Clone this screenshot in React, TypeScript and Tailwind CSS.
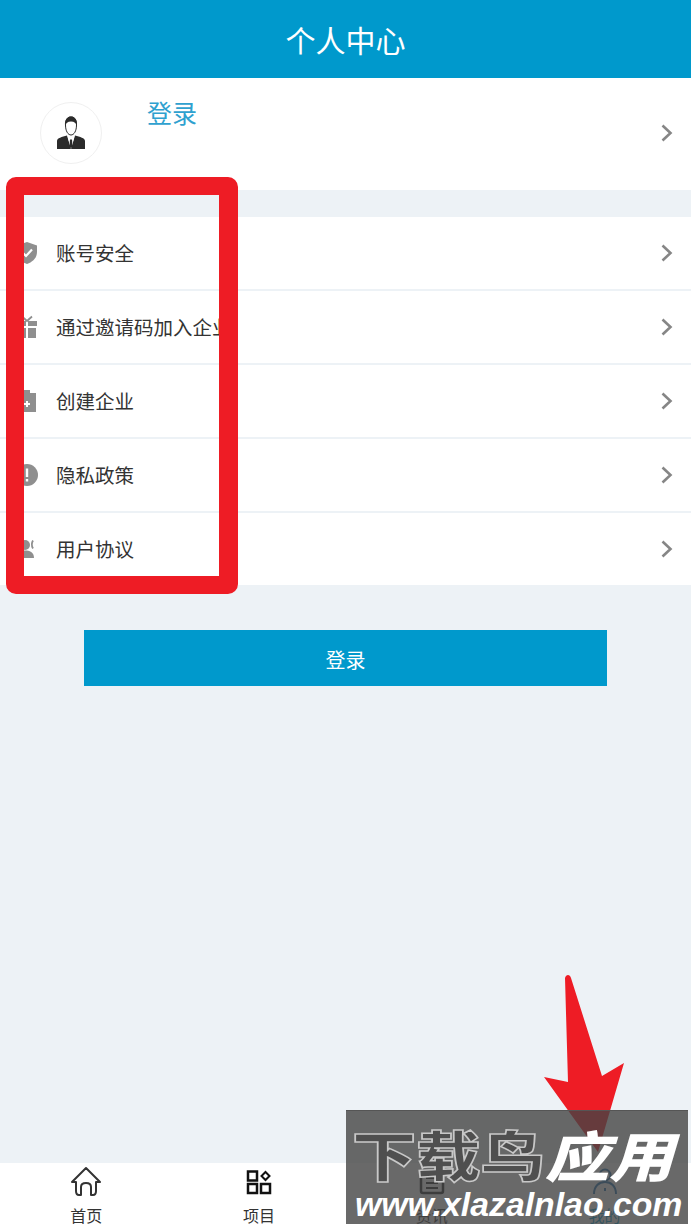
import React from "react";

const rows = ["账号安全", "通过邀请码加入企业", "创建企业", "隐私政策", "用户协议"];

const icons: React.ReactNode[] = [
  <svg key="a" viewBox="0 0 22 24" className="h-[24px] w-[22px]"><path d="M11 1 L21 4.500 V11 C21 17 16.500 21 11 23 C5.500 21 1 17 1 11 V4.500 Z" fill="#8f8f8f" /><path d="M6.500 11.500 L10 15 L16 8.500" stroke="#fff" strokeWidth="2.200" fill="none" /></svg>,
  <svg key="b" viewBox="0 0 22 24" className="h-[24px] w-[22px]"><path d="M6 1.500 L11 6 L16 1.500" stroke="#8f8f8f" strokeWidth="1.800" fill="none" /><path d="M1 6 H10 V11 H1 Z M12 6 H21 V11 H12 Z M2 13 H10 V23 H2 Z M12 13 H20 V23 H12 Z" fill="#8f8f8f" /></svg>,
  <svg key="c" viewBox="0 0 22 24" className="h-[24px] w-[22px]"><path d="M3 4 H8 V1 H14 V4 H20 V23 H3 Z" fill="#8f8f8f" /><path d="M8 15 H14 M11 12 V18" stroke="#fff" strokeWidth="2" /></svg>,
  <svg key="d" viewBox="0 0 22 24" className="h-[24px] w-[22px]"><circle cx="11" cy="12" r="11" fill="#8f8f8f" /><path d="M11 5.500 V14 M11 16 V18.500" stroke="#fff" strokeWidth="2.400" /></svg>,
  <svg key="e" viewBox="0 0 22 24" className="h-[24px] w-[22px]"><circle cx="9" cy="8" r="5" fill="#8f8f8f" /><path d="M0 21 C0 15 4.500 13.500 9 13.500 C13.500 13.500 18 15 18 21 Z" fill="#8f8f8f" /><path d="M17 3.500 C15.500 6 15.500 9 17 11.500" stroke="#8f8f8f" strokeWidth="1.800" fill="none" /></svg>,
];

function Chevron() {
  return (
    <svg viewBox="0 0 12 18" className="h-[18px] w-[12px]" fill="none" stroke="#868686" strokeWidth="2.600">
      <path d="M1.500 1.500 L9.500 9 L1.500 16.500" />
    </svg>
  );
}

function Nav({ label, active, children }: { label: string; active?: boolean; children: React.ReactNode }) {
  return (
    <div className={`flex flex-1 flex-col items-center pt-[1px] ${active ? "text-[#0099cc]" : "text-[#333]"}`}>
      <div className="mb-[5px] flex h-[36px] items-center justify-center">{children}</div>
      <span className="text-[16px] leading-[20px]">{label}</span>
    </div>
  );
}

export default function App() {
  return (
    <div className="relative flex h-[1230px] w-[691px] flex-col overflow-hidden bg-[#edf2f6] font-['Noto_Sans_CJK_SC','Liberation_Sans',sans-serif]">
      <header className="flex h-[78px] items-center justify-center bg-[#0099cc] text-[30px] text-white">个人中心</header>

      <section className="flex h-[112px] items-start bg-white pl-[40px] pr-[18px]">
        <div className="mt-[24px] flex h-[62px] w-[62px] items-center justify-center rounded-full border border-[#f0f0f0] bg-white">
          <svg viewBox="0 0 30 34" className="h-[34px] w-[30px]">
            <path d="M9.500 9 C9.500 3 12 1 15 1 C18 1 20.500 3 20.500 9 C20.500 15 18 19 15 19 C12 19 9.500 15 9.500 9 Z" fill="#fff" stroke="#2b2b2b" strokeWidth="1" />
            <path d="M9 10 C8.500 3 11.500 0.500 15 0.500 C18.500 0.500 21.500 3 21 10 C20 7 18.500 5.500 15 5.500 C11.500 5.500 10 7 9 10 Z" fill="#2b2b2b" />
            <path d="M1 33 V25 C1 22 6 21 11 19.500 L15 33 L19 19.500 C24 21 29 22 29 25 V33 Z" fill="#2b2b2b" />
            <path d="M11.500 20 L15 23 L18.500 20 L15 33 Z" fill="#fff" />
            <path d="M14 23.500 H16 L16.500 30 L15 33 L13.500 30 Z" fill="#2b2b2b" />
          </svg>
        </div>
        <div className="ml-[45px] mt-[16px] text-[25px] leading-[36px] text-[#2fa1cf]">登录</div>
        <div className="ml-auto mt-[46px]"><Chevron /></div>
      </section>

      <section className="mt-[27px] flex flex-col gap-[2px]">
        {rows.map((r, i) => (
          <div key={r} className="flex h-[72px] items-center bg-white pl-[16px] pr-[18px]">
            <div className="w-[40px]">{icons[i]}</div>
            <span className="text-[19.500px] text-[#333]">{r}</span>
            <div className="ml-auto"><Chevron /></div>
          </div>
        ))}
      </section>

      <div className="mx-[84px] mt-[45px] flex h-[56px] items-center justify-center bg-[#0099cc] pt-[3px] text-[20px] text-white">登录</div>

      <nav className="mt-auto flex h-[67px] bg-white">
        <Nav label="首页">
          <svg viewBox="0 0 32 32" className="h-[32px] w-[32px]" fill="none" stroke="#333" strokeWidth="2">
            <path d="M9 29 C6.500 29 6 27 6 25 V16 H2 L16 2 L30 16 H26 V25 C26 27 25.500 29 23 29 H21 V21 C21 18 19 17 16 17 C13 17 11 18 11 21 V29 Z" strokeLinejoin="round" />
          </svg>
        </Nav>
        <Nav label="项目">
          <svg viewBox="0 0 26 26" className="h-[26px] w-[26px]" fill="none" stroke="#111" strokeWidth="2.500">
            <rect x="2" y="2.500" width="9" height="9" />
            <rect x="2" y="15" width="9" height="9" />
            <rect x="15" y="15" width="9" height="9" />
            <path d="M19.500 3 L23.500 7 L19.500 11 L15.500 7 Z" strokeWidth="2" />
          </svg>
        </Nav>
        <Nav label="资讯">
          <svg viewBox="0 0 28 28" className="h-[28px] w-[28px]" fill="none" stroke="#222" strokeWidth="2.500">
            <rect x="3" y="3" width="22" height="22" rx="2" />
            <path d="M8 10 H20 M8 15 H20 M8 20 H20" strokeWidth="2" />
          </svg>
        </Nav>
        <Nav label="我的" active>
          <svg viewBox="0 0 28 28" className="h-[28px] w-[28px]" fill="none" stroke="#1f6fb0" strokeWidth="2">
            <circle cx="14" cy="7" r="5.500" />
            <path d="M3 26 C3 18 8 14 14 14 C20 14 25 18 25 26 M14 20 V23" />
          </svg>
        </Nav>
      </nav>

      {/* red annotation rectangle */}
      <div className="absolute left-[6px] top-[177px] h-[417px] w-[232px] rounded-[10px] border-y-[18px] border-l-[18px] border-r-[19px] border-[#ee1c25]" />

      {/* red annotation arrow, under the watermark */}
      <svg viewBox="0 0 691 1230" className="pointer-events-none absolute inset-0 h-[1230px] w-[691px]">
        <path d="M565 978 C566 974 570 974 571 978 L602 1076 L624 1063 L598 1152 L544 1077 L568 1082 Z" fill="#ee1c25" />
      </svg>

      {/* watermark */}
      <div className="absolute left-[346px] top-[1110px] flex h-[114px] w-[342px] flex-col border-t border-[#555] bg-[#444]/80 pl-[6px] font-['Liberation_Sans',sans-serif]">
        <div className="mt-[15px] flex h-[56px] origin-left scale-x-[1.19] items-center text-[54px] font-black leading-[54px]">
          <span className="text-[#4f4f4f] [-webkit-text-stroke:1.500px_#c8c8c8] font-['Noto_Sans_CJK_SC',sans-serif]">下载鸟</span>
          <span className="text-white italic font-['Noto_Sans_CJK_SC',sans-serif]">应用</span>
        </div>
        <div className="ml-[3px] mt-[4px] text-[33.800px] font-bold italic leading-[36px] text-white">www.xlazalnlao.com</div>
      </div>
    </div>
  );
}
